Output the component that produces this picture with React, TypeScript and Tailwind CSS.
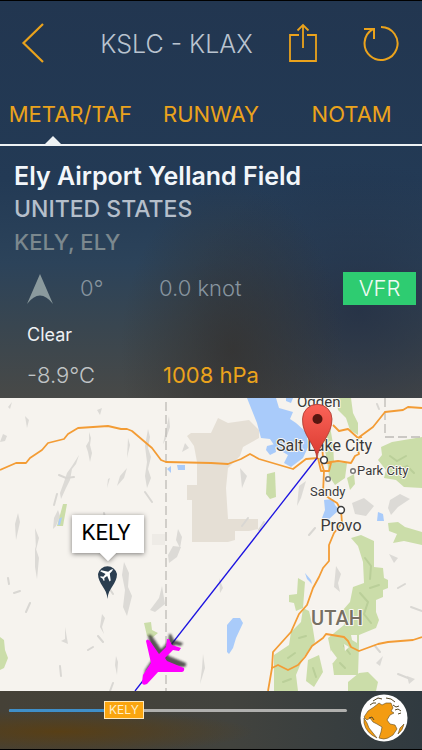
import { useState } from 'react';
import { clsx } from 'clsx';

const tabs = ['METAR/TAF', 'RUNWAY', 'NOTAM'];

const forests = [
  'M381 49L392 44L422 39V90L404 89L396 82L384 80L386 72L378 62L382 57Z',
  'M320 30L330 28L333 46L334 64L347 65L345 80L335 87L329 78L327 62Z',
  'M336 0H351L353 15L358 25V37L350 32L346 20L338 12Z',
  'M347 80L354 76L355 86L350 92Z',
  'M267 76L275 74L276 99L270 101L266 96Z',
  'M351 140L361 137L374 143V169L383 170L384 180L388 182V190L383 192L383 199L376 202V214L379 222L376 230L359 237V247L358 277H334L331 254L328 240L344 227L343 212L350 204L353 189L364 185L363 164L358 148Z',
  'M388 125L398 124L405 129L422 134V147L404 143L393 145L397 136L389 133Z',
  'M359 275L368 274L378 284L376 293H348V284Z',
  'M308 262L319 257L323 274L314 289L306 283Z',
  'M303 210L309 213L312 225L315 244L303 260L296 277L298 293H274V257L289 247L291 234L301 224Z',
  'M298 180L305 184L303 210L296 213L294 205L289 204V197L297 196Z',
  'M0 239L4 242L5 252L8 260L4 270L0 272Z',
  'M144 225L151 224L152 232L158 235L152 240L147 238Z',
  'M63 106H67L63 128H57Z',
];

const lakes = [
  'M247 0H276L279 10L293 14L290 21L296 25L306 34L309 47L303 60L291 69L284 65L288 57L276 50L270 41L261 40L257 25Z',
  'M286 0H293L291 5L286 3Z',
  'M267 48L275 46L276 54L270 57L266 52Z',
  'M324 102L333 101L335 107L339 112L328 122L322 120L325 112Z',
  'M378 114L383 116L384 123H377Z',
  'M227 227L233 220L240 220L243 225L236 240L233 250L229 256L227 254Z',
  'M305 175L311 182L312 186L307 181Z',
  'M177 67H185V72H178Z',
  'M167 71L171 68V75Z',
  'M59 121L62 119L60 127H58Z',
];

const ridges = [
  'M89 34L91 40L90 47L92 55L90 64L88 54L86 48L89 43Z',
  'M79 57L76 66L72 71L70 82L66 90L61 101L60 95L64 84L67 75L72 68Z',
  'M58 112L60 118L56 128L53 131L54 120Z',
  'M148 31L150 39L148 50L151 59L148 71L151 80L147 90L145 78L147 64L145 48Z',
  'M169 18L170 29L166 41L163 46L166 32Z',
  'M127 70L124 80L117 88L120 78Z',
  'M128 40L130 47L127 60Z',
  'M110 80L107 90L108 81Z',
  'M185 45L189 50L182 54Z',
  'M18 115L20 124L16 142L15 126Z',
  'M35 130L39 140L36 152Z',
  'M178 131L182 139L180 150L176 142Z',
  'M173 148L181 149L177 159L169 165L168 157Z',
  'M35 148L39 160L37 181L35 169Z',
  'M124 164L129 175L128 189L132 198L127 218L123 209L125 192L122 177Z',
  'M159 200L162 188L165 206L155 214L150 212Z',
  'M102 216L105 220L102 229L104 236L100 229Z',
  'M65 229L68 246L61 243L65 241Z',
  'M116 258L118 264L117 277L115 267Z',
  'M203 256L205 270L200 286L202 270Z',
  'M25 18L29 22L27 30Z',
  'M3 36L7 38L5 43L0 44Z',
  'M8 9L12 4L10 11Z',
  'M97 12L102 10L100 17Z',
  'M336 168L341 176L338 185L340 194L334 189Z',
  'M390 102L400 96L410 101L398 109L391 117L388 110Z',
  'M352 105L364 100L374 108L366 118L355 116Z',
  'M299 88L306 83L301 100L297 108Z',
  'M389 156L398 160L394 165Z',
  'M240 70L247 78L242 90Z',
  'M219 180L223 190L220 195Z',
  'M376 265L383 258L380 268Z',
  'M407 278L415 281L409 286Z',
];

const ridgeLines =
  'M30 205L26 214M54 107L57 96M104 115L106 124M145 94L152 104M109 190L113 196M98 238L103 244M113 285L110 293M59 77L66 80L74 79M14 195L20 193M8 180L9 186M88 252L93 249M60 268L61 278M398 190L405 186M375 248L380 254M398 276L408 280M411 209L422 213M315 130L309 137M248 120L242 128M264 124L259 132M310 4L306 8M377 6L379 11';

const roads = [
  'M0 72L16 65H26L30 60L42 52L48 45L64 41L68 36L78 30L108 28L121 31L127 31L132 33L152 50L161 62L166 64L211 65L228 66L241 61L250 56L259 61L293 71L306 61L318 60',
  'M318 60L321 73H329L331 65H324L338 63L351 65L355 58L359 56L357 49L358 40L373 29L385 14L403 12L408 9L422 10',
  'M321 32L323 60M333 27L339 33L348 31L358 40L362 39',
  'M320 60L324 73L323 95L329 100L337 105L341 112L342 125L334 135L329 147V163L323 170L319 179L313 190L307 207L299 216L291 234L273 254L272 270L268 293',
  'M272 270L278 267L288 272L298 267L305 259L312 248L323 240L326 236L344 239L348 243L351 249L359 253L378 246L388 244L413 242L422 239',
];

const planePath =
  'M142 284Q142 288 147 286L158 274H182Q185 273 184 270L167 263L165 260L173 252L179 253L181 250L172 247L169 241H167L166 249L159 256L150 243Q147 240 146 243L151 265L143 277Z';

function ShareIcon() {
  return (
    <svg viewBox="0 0 30 40" className="h-10 w-[30px]" fill="none" stroke="currentColor" strokeWidth="1.8">
      <path d="M11 12H2V38H28V12H19M15 25V2M9.500 7.500L15 2L20.500 7.500" />
    </svg>
  );
}

function ReloadIcon() {
  return (
    <svg viewBox="0 0 38 38" className="h-[38px] w-[38px]" fill="none" stroke="currentColor" strokeWidth="2">
      <path d="M19 3A16.500 16.500 0 1 1 11 5.100M2 5H12V15" />
    </svg>
  );
}

function GlobeIcon() {
  return (
    <svg viewBox="0 0 48 48" className="h-12 w-12">
      <circle cx="24" cy="24" r="23.500" fill="#fff" />
      <g stroke="#5e4a22" strokeWidth=".6" fill="#f39c12">
        <path d="M14 13L19 9L22 11L26 9L31 9L33 14L31 17L34 19L30 21L27 26L30 30L35 31L37 35L33 41L28 44Q24 46 19 44L21 38L22 33L17 30L13 28L10 24L7 26L4 23L8 17Z" />
        <path d="M4 24L7 29L9 34L13 39L17 44Q6 39 4 29Z" />
        <path d="M44 30Q43 36 38 40L40 34Z" />
      </g>
      <path
        d="M13 7L18 4L22 5M26 4L31 5L35 8M10 11L13 9L16 9M33 11L36 13L39 12M35 16L38 15L41 17M38 20L41 19M9 24L12 23L14 26"
        fill="none"
        stroke="#574825"
        strokeWidth="1"
      />
    </svg>
  );
}

function RouteMap() {
  return (
    <svg
      viewBox="0 0 422 293"
      preserveAspectRatio="xMidYMid slice"
      className="absolute inset-0 h-full w-full font-['Roboto',sans-serif]"
      role="img"
      aria-label="Route map"
    >
      <defs>
        <linearGradient id="pin" x1="0" y1="0" x2="0" y2="1">
          <stop offset="0" stopColor="#fb6358" />
          <stop offset="1" stopColor="#d93a30" />
        </linearGradient>
        <filter id="soft" x="-20%" y="-20%" width="140%" height="150%">
          <feGaussianBlur stdDeviation="1" />
        </filter>
        <filter id="shade" x="-20%" y="-20%" width="140%" height="150%">
          <feDropShadow dx="0" dy="1" stdDeviation="2.500" floodOpacity=".5" />
        </filter>
      </defs>

      <rect width="422" height="293" fill="#f6f3ee" />
      <path
        d="M187 38L191 35H200L211 35L218 20L228 25L249 22L259 32V40L243 49L240 58L228 70L226 90L228 121H258V131L249 133H235V142L228 144H192V102H187V87H197V64L194 48Z"
        fill="#e5dfd5"
      />
      <path d="M152 136H165V147H152Z" fill="#eeebe6" />
      <g fill="#dcdad6">{ridges.map((d) => <path key={d} d={d} />)}</g>
      <path d={ridgeLines} fill="none" stroke="#d9d7d3" strokeWidth="2" strokeLinecap="round" />
      <g fill="#cbdda9">{forests.map((d) => <path key={d} d={d} />)}</g>
      <path
        d="M390 58L397 63L406 58M398 72L407 68L414 75M365 160L371 168L370 181M360 195L368 204L364 216L371 225M344 248L350 256M340 265L345 270M288 260L295 255M299 240L306 238M283 284L291 281M313 270L316 279M370 190L379 187"
        fill="none"
        stroke="#bacf99"
        strokeWidth="2"
        strokeLinecap="round"
      />
      <g fill="#a9cbfa">{lakes.map((d) => <path key={d} d={d} />)}</g>
      <path d="M351 237H357V245L352 242ZM331 252L337 260L333 265H330ZM344 246L349 249L345 253Z" fill="#f6f3ee" />
      <path d="M166 4V293M385 0V39H422" fill="none" stroke="#bdbab6" strokeWidth="1.300" strokeDasharray="9 4" />
      <g fill="none" stroke="#f39c35" strokeWidth="1.800" strokeLinejoin="round">
        {roads.map((d) => <path key={d} d={d} />)}
      </g>

      <g fill="#fff" stroke="#3c3c3c" strokeWidth="1.500">
        <circle cx="324" cy="62" r="3.400" />
        <circle cx="341" cy="112" r="3.400" />
        <circle cx="328" cy="81" r="2.300" stroke="#777" />
        <circle cx="353" cy="73" r="2.300" stroke="#777" />
      </g>
      <g fill="#3a3a3a" stroke="#faf8f4" strokeWidth="2" paintOrder="stroke" strokeLinejoin="round">
        <g className="text-[16px]" textAnchor="middle">
          <text x="324" y="53">Salt Lake City</text>
          <text x="341" y="133">Provo</text>
        </g>
        <g className="text-[13px]">
          <text x="297" y="9" className="text-[15px]">Ogden</text>
          <text x="357" y="77">Park City</text>
          <text x="310" y="98">Sandy</text>
        </g>
        <text x="337" y="227" textAnchor="middle" className="text-[20px] font-medium" fill="#777064">UTAH</text>
      </g>

      <path d="M317 60L135 293" stroke="#1b12e0" strokeWidth="1.300" />
      <path
        d="M317 61C316 46 302 38 302.500 21A14.500 14.500 0 0 1 332 21C332 38 318 46 317 61Z"
        fill="url(#pin)"
        stroke="#a8382f"
        strokeWidth=".8"
      />
      <circle cx="317.500" cy="21" r="5" fill="#571610" />

      <path d={planePath} fill="#222" opacity=".75" filter="url(#soft)" transform="translate(2 -5)" />
      <path d={planePath} fill="#f0f" />

      <path d="M107.500 201C107 190 98 186 98 176A9.700 9.700 0 0 1 117 176C117 186 108 190 107.500 201Z" fill="#2b3e50" />
      <g transform="translate(107.500 176) rotate(48)" fill="#fff">
        <path d="M0 -7.500Q1.300 -6 1.200 -2L7 2V3.500L1.200 1.500L.8 5L2.800 6.500V7.500L0 6.800L-2.800 7.500V6.500L-.8 5L-1.200 1.500L-7 3.500V2L-1.200 -2Q-1.300 -6 0 -7.500Z" />
      </g>
      <path d="M72 117H144V155H116L108 163L100 155H72Z" fill="#fff" filter="url(#shade)" />
      <text x="106" y="142" textAnchor="middle" className="text-[22px]" fill="#000">KELY</text>
    </svg>
  );
}

export default function App() {
  const [active, setActive] = useState('METAR/TAF');
  const [position, setPosition] = useState(34);

  return (
    <div className="flex h-screen flex-col border-y border-black bg-[#3e4140] font-['Inter','Liberation_Sans',sans-serif]">
      <div className="flex flex-col bg-[radial-gradient(ellipse_at_55%_88%,rgba(52,50,48,0.8),transparent_34%),radial-gradient(ellipse_at_85%_78%,rgba(33,44,66,0.7),transparent_34%),linear-gradient(to_bottom,#223650_0%,#233a55_45%,#2c435a_66%,#394650_82%,#484947_100%)]">
        <header className="flex h-[84px] items-center pr-[22px] pl-[21px] text-[#eba31c]">
          <button aria-label="Back" className="w-12">
            <svg viewBox="0 0 26 42" className="h-[42px] w-[26px]" fill="none" stroke="currentColor" strokeWidth="2.200">
              <path d="M22 2L2.500 21L22 40" />
            </svg>
          </button>
          <h1 className="flex-1 pt-1 pl-7 text-center text-[25px] font-light whitespace-nowrap text-[#b9c3cf]">KSLC - KLAX</h1>
          <div className="flex items-center gap-11 pl-8">
            <button aria-label="Share"><ShareIcon /></button>
            <button aria-label="Reload"><ReloadIcon /></button>
          </div>
        </header>

        <nav className="grid grid-cols-3 border-b-2 border-[#eef2f4]">
          {tabs.map((tab) => (
            <button
              key={tab}
              onClick={() => setActive(tab)}
              className="relative h-[59px] text-[22px] text-[#eba31c]"
            >
              {tab}
              <span
                className={clsx(
                  'absolute bottom-0 left-[32%] border-x-8 border-b-8 border-x-transparent border-b-[#eef2f4]',
                  active !== tab && 'hidden',
                )}
              />
            </button>
          ))}
        </nav>

        <section className="px-[14px] pt-3">
          <h2 className="text-[25px] leading-9 font-semibold text-[#f2f6fa]">Ely Airport Yelland Field</h2>
          <p className="text-[23px] leading-[30px] font-medium text-[#b5bfcb]">UNITED STATES</p>
          <p className="text-[22px] leading-9 font-medium text-[#7b888e]">KELY, ELY</p>

          <div className="-mr-2 flex h-[57px] items-center pl-3 text-[22px] font-light text-[#87949f]">
            <svg viewBox="0 0 28 32" className="h-8 w-7" fill="#8b9a9d">
              <path d="M14 1L27 31Q14 14 1 31Z" />
            </svg>
            <span className="w-[79px] pl-[26px]">0°</span>
            <span className="flex-1 pl-[26px]">0.0 knot</span>
            <span className="flex h-[33px] w-[73px] items-center justify-center bg-[#2ecc71] text-[#f0fbf4]">VFR</span>
          </div>

          <p className="pl-[13px] text-[18px] leading-9 text-[#eef1f3]">Clear</p>
          <div className="flex h-[45px] items-center pl-[13px] text-[22px]">
            <span className="w-[136px] font-light text-[#c0c4c6]">-8.9°C</span>
            <span className="text-[#eba31c]">1008 hPa</span>
          </div>
        </section>
      </div>

      <main className="relative min-h-0 flex-1 overflow-hidden">
        <RouteMap />
      </main>

      <footer className="flex h-[58px] shrink-0 items-center gap-[13px] bg-[radial-gradient(ellipse_at_14%_70%,#583f16,transparent_38%),linear-gradient(to_right,#454137,#42433e_55%,#303a40)] pr-[14px] pl-[9px]">
        <div className="relative mb-5 h-5 flex-1">
          <div className="absolute inset-x-0 top-[9px] h-[3px] rounded bg-[#b0b0ae]" />
          <div className="absolute top-[9px] left-0 h-[3px] rounded bg-[#3f8fc9]" style={{ width: `${position}%` }} />
          <span
            className="absolute top-[1px] flex h-[18px] w-10 -translate-x-1/2 items-center justify-center border border-[#fde9bd] bg-[#faa50f] text-[12px] text-[#fff0c9]"
            style={{ left: `${position}%` }}
          >
            KELY
          </span>
          <input
            type="range"
            aria-label="Position along route"
            value={position}
            onChange={(e) => setPosition(Number(e.target.value))}
            className="absolute inset-0 h-full w-full opacity-0"
          />
        </div>
        <button aria-label="Globe" className="-mt-1"><GlobeIcon /></button>
      </footer>
    </div>
  );
}
